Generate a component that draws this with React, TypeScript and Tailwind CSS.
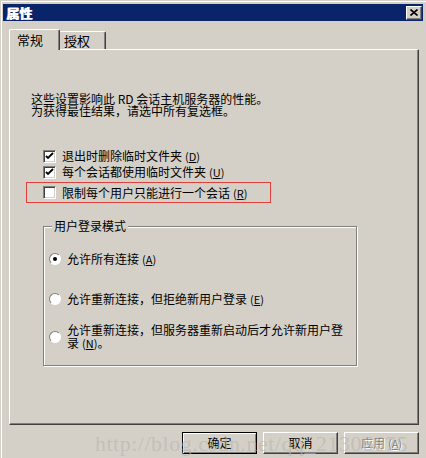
const FONT = "font-['SimSun','Noto_Sans_CJK_SC',sans-serif]";

const Hotkey = ({ k }: { k: string }) => (
  <span className="ml-[3px] text-[11px]">
    (<span className="underline">{k}</span>)
  </span>
);

const CheckBox = ({ checked }: { checked?: boolean }) => (
  <span className="w-[13px] h-[13px] shrink-0 bg-white border border-t-[#808080] border-l-[#808080] border-r-white border-b-white shadow-[inset_1px_1px_0_#404040,inset_-1px_-1px_0_#d4d0c8] flex items-center justify-center">
    {checked && (
      <svg width="9" height="9" viewBox="0 0 9 9">
        <path d="M1 4 L3 6 L8 1" fill="none" stroke="#000" strokeWidth="1.8" />
      </svg>
    )}
  </span>
);

const Radio = ({ checked }: { checked?: boolean }) => (
  <span className="w-[12px] h-[12px] shrink-0 rounded-full bg-white border border-t-[#808080] border-l-[#808080] border-r-white border-b-white flex items-center justify-center">
    {checked && <span className="w-[4px] h-[4px] rounded-full bg-black" />}
  </span>
);

const Button = ({ label, def, disabled }: { label: React.ReactNode; def?: boolean; disabled?: boolean }) => (
  <div
    className={`w-[75px] h-[22px] flex items-center justify-center text-[12px] bg-[#d4d0c8] border ${
      def
        ? "border-black shadow-[inset_1px_1px_0_#fff,inset_-1px_-1px_0_#808080]"
        : "border-t-white border-l-white border-r-[#404040] border-b-[#404040] shadow-[inset_-1px_-1px_0_#808080]"
    } ${disabled ? "text-[#808080] [text-shadow:1px_1px_0_#fff]" : "text-black"}`}
  >
    {label}
  </div>
);

export default function App() {
  return (
    <div className={`w-[426px] h-[458px] bg-[#d4d0c8] ${FONT} text-[12px] text-black relative overflow-hidden shadow-[inset_1px_1px_0_#d4d0c8,inset_2px_2px_0_#fff]`}>
      <div className="pt-[4px] pl-[3px] pr-[3px]">
        {/* title bar */}
        <div className="h-[17px] bg-[#0a246a] flex items-center justify-between pl-[3px] pr-[1px]">
          <span className="text-white font-bold text-[13px] leading-none [text-shadow:1px_0_0_#fff]">属性</span>
          <div className="w-[16px] h-[14px] bg-[#d4d0c8] border border-t-white border-l-white border-r-[#404040] border-b-[#404040] shadow-[inset_-1px_-1px_0_#808080] flex items-center justify-center">
            <svg width="8" height="7" viewBox="0 0 8 7">
              <path d="M0.5 0.5 L7.5 6.5 M7.5 0.5 L0.5 6.5" stroke="#000" strokeWidth="1.6" />
            </svg>
          </div>
        </div>
      </div>

      {/* tabs */}
      <div className="flex items-end pl-[9px] pt-[7px] h-[28px] relative z-10">
        <div className="w-[51px] h-[21px] bg-[#d4d0c8] border-t border-l border-t-white border-l-white border-r border-r-[#404040] shadow-[inset_-1px_0_0_#808080] rounded-tl-[2px] rounded-tr-[2px] pl-[7px] pt-[3px] mb-[-1px] text-[13px] leading-[14px]">
          常规
        </div>
        <div className="w-[46px] h-[18px] bg-[#d4d0c8] border-t border-t-white border-r border-r-[#404040] shadow-[inset_-1px_0_0_#808080] rounded-tr-[2px] pl-[4px] pt-[2px] text-[13px] leading-[14px]">
          授权
        </div>
      </div>

      {/* panel */}
      <div className="ml-[9px] w-[410px] h-[376px] border border-t-white border-l-white border-r-[#404040] border-b-[#404040] shadow-[inset_-1px_-1px_0_#808080] pt-[43px]">
        <div className="pl-[21px] leading-[12px]">
          <div>这些设置影响此 RD 会话主机服务器的性能。</div>
          <div>为获得最佳结果，请选中所有复选框。</div>
        </div>

        <div className="mt-[31px] flex flex-col">
          <label className="h-[16px] flex items-center gap-[6px] pl-[33px]">
            <CheckBox checked />
            <span>退出时删除临时文件夹<Hotkey k="D" /></span>
          </label>
          <label className="h-[16px] flex items-center gap-[6px] pl-[33px]">
            <CheckBox checked />
            <span>每个会话都使用临时文件夹<Hotkey k="U" /></span>
          </label>
          <div className="ml-[16px] mt-[2px] w-[245px] h-[21px] border border-[#e0403c] flex items-center gap-[6px] pl-[16px]">
            <CheckBox />
            <span>限制每个用户只能进行一个会话<Hotkey k="R" /></span>
          </div>
        </div>

        {/* group box */}
        <div className="ml-[33px] mt-[23px] w-[314px] h-[140px] border border-[#808080] shadow-[1px_1px_0_#fff,inset_1px_1px_0_#fff] relative">
          <span className="absolute left-[8px] top-[-8px] bg-[#d4d0c8] px-[2px] leading-[14px]">用户登录模式</span>
          <div className="flex flex-col pl-[5px]">
            <div className="mt-[25px] h-[14px] flex items-center gap-[6px]">
              <Radio checked />
              <span>允许所有连接<Hotkey k="A" /></span>
            </div>
            <div className="mt-[26px] h-[14px] flex items-center gap-[6px]">
              <Radio />
              <span>允许重新连接，但拒绝新用户登录<Hotkey k="E" /></span>
            </div>
            <div className="mt-[17px] flex items-center gap-[6px]">
              <Radio />
              <span className="w-[280px] leading-[13px]">
                允许重新连接，但服务器重新启动后才允许新用户登录<Hotkey k="N" />。
              </span>
            </div>
          </div>
        </div>
      </div>

      {/* buttons */}
      <div className="flex justify-end gap-[6px] pr-[7px] mt-[7px]">
        <Button label="确定" def />
        <Button label="取消" />
        <Button label={<>应用<Hotkey k="A" /></>} disabled />
      </div>

      <span className="absolute left-[95px] top-[427px] font-['Liberation_Serif',serif] text-[22px] text-[#b8b4ac]/60 tracking-[0.5px] pointer-events-none">
        http://blog.csdn.net/qq_21306675
      </span>
    </div>
  );
}
